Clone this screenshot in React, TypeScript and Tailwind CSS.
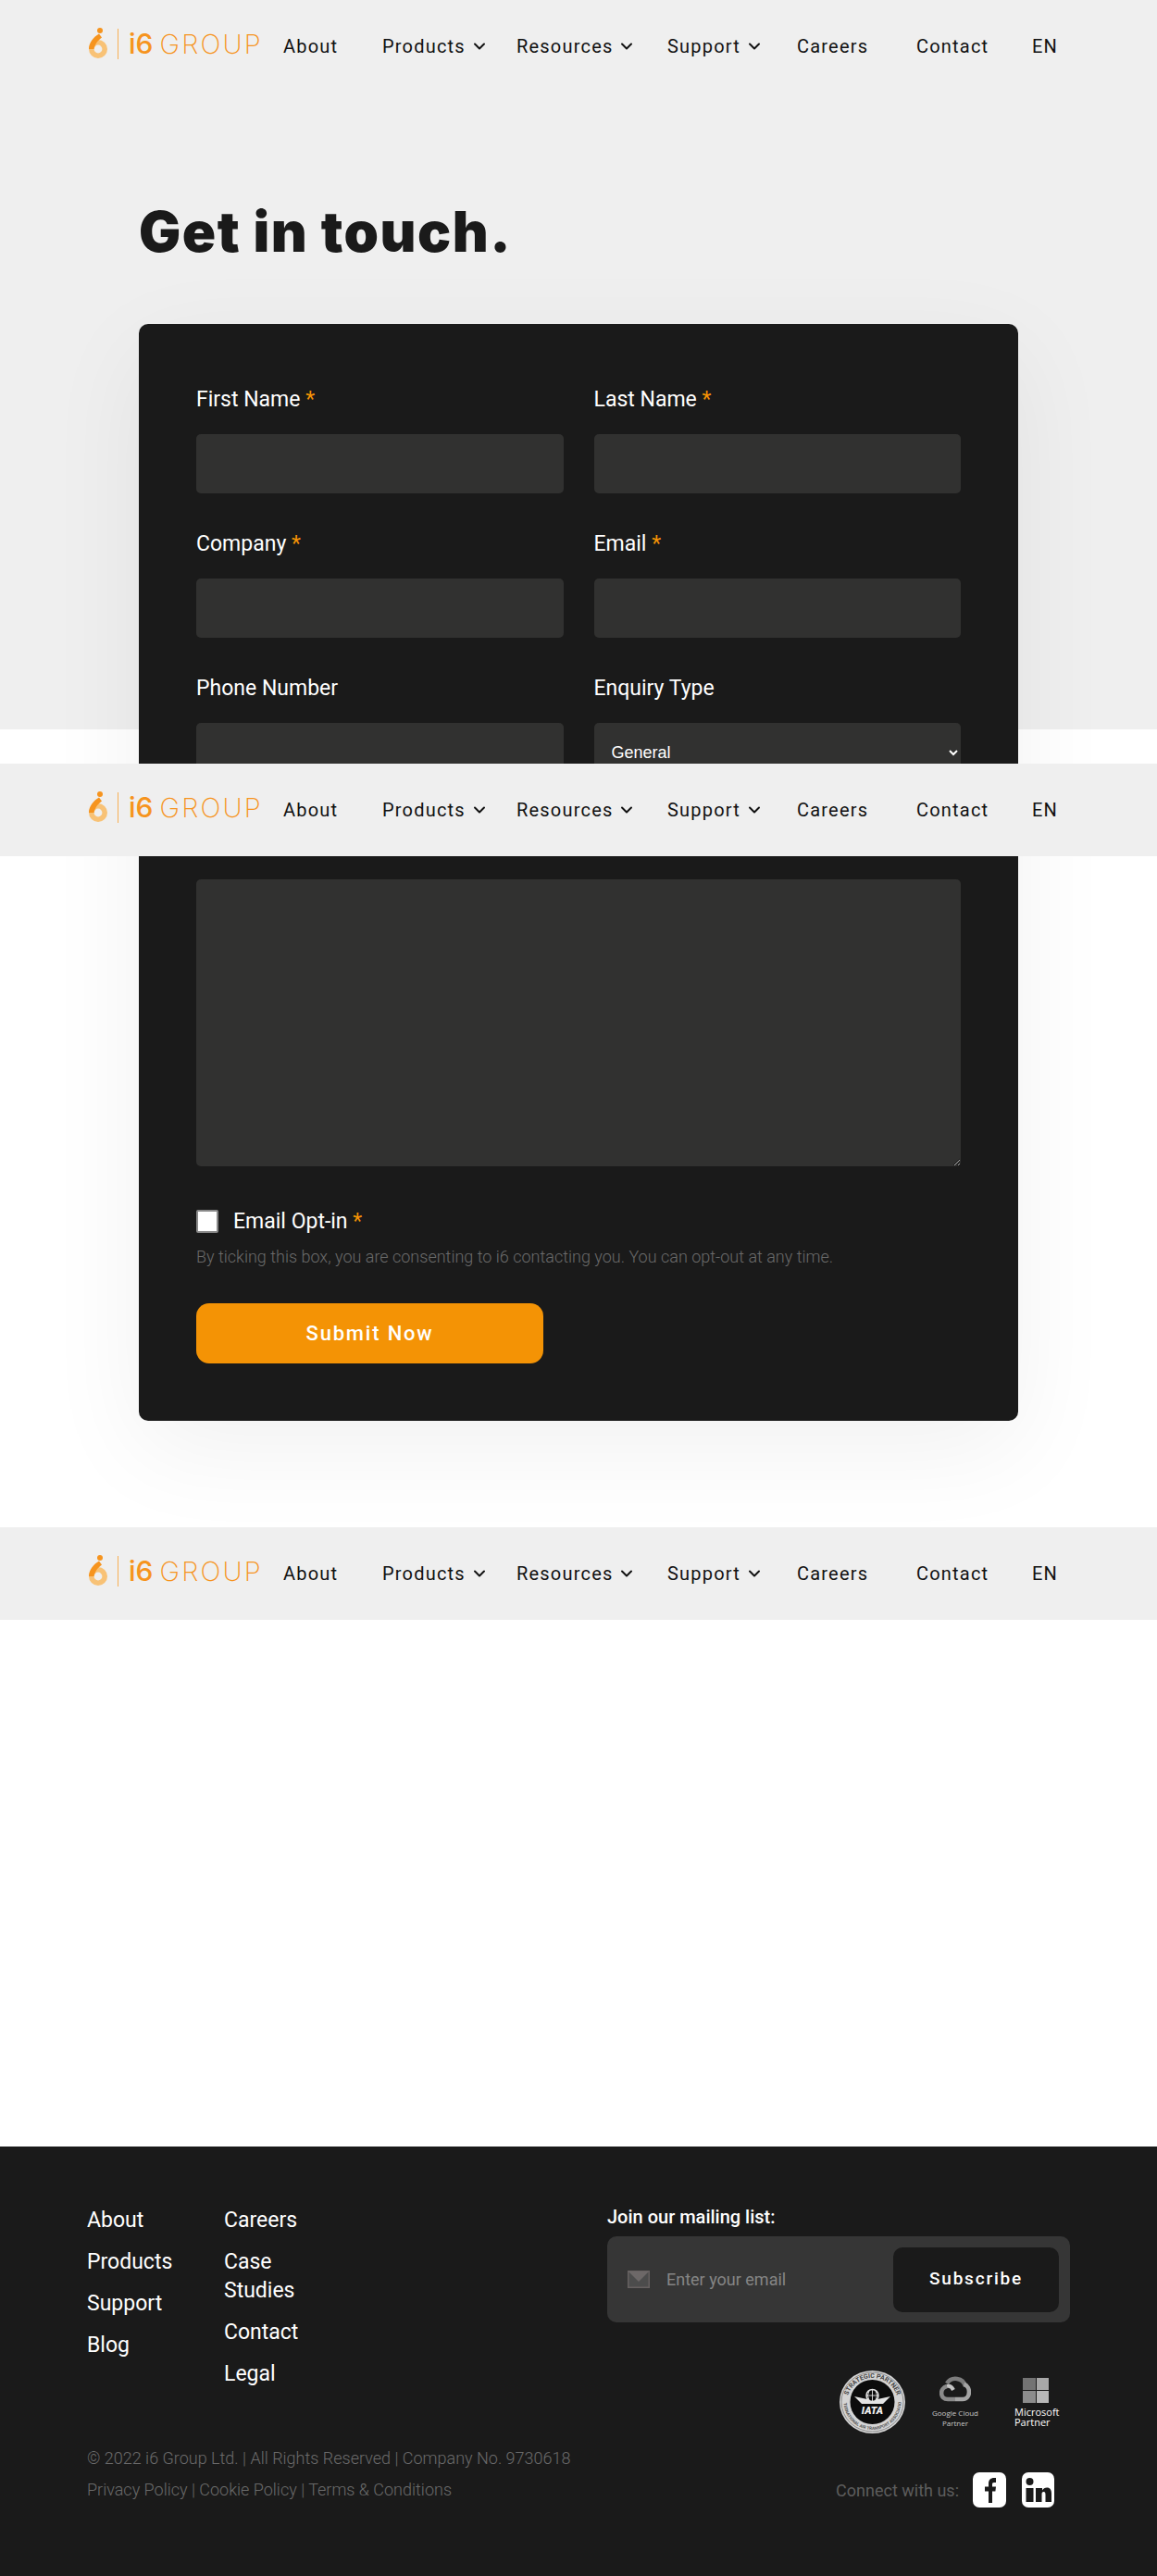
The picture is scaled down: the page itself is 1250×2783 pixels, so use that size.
import { ChevronDown } from "lucide-react";

const navItems = [
  { label: "About", width: "w-[107px]" },
  { label: "Products", width: "w-[145px]", caret: true },
  { label: "Resources", width: "w-[163px]", caret: true },
  { label: "Support", width: "w-[140px]", caret: true },
  { label: "Careers", width: "w-[129px]" },
  { label: "Contact", width: "w-[125px]" },
  { label: "EN", width: "w-[30px]" },
];

function Logo() {
  return (
    <div className="mb-[6px] flex w-[212px] items-center">
      <svg width="24" height="34" viewBox="0 0 24 34" className="shrink-0">
        <circle cx="12" cy="23" r="7.2" fill="none" stroke="#f8c276" strokeWidth="5.6" />
        <path d="M2 23 C2 16 7 10 13 6.5 L16 10.5 C12 13.5 8.5 17.5 7.5 23 Z" fill="#f6941e" />
        <circle cx="14" cy="3" r="3" fill="#f6941e" />
      </svg>
      <span className="ml-[9px] h-[33px] w-px bg-[#f8b055]" />
      <span className="ml-[11px] text-[30px] leading-none font-medium text-[#f6941e] [font-family:Inter,sans-serif]">i6</span>
      <span className="ml-[7px] text-[29px] leading-none font-extralight tracking-[2.2px] text-[#f6941e] [font-family:Inter,sans-serif]">GROUP</span>
    </div>
  );
}

function Header({ top }: { top: string }) {
  return (
    <header className={`absolute left-0 z-20 flex h-[100px] w-full items-center bg-[#efefef] pl-[94px] ${top}`}>
      <Logo />
      <nav className="flex items-center">
        {navItems.map((item) => (
          <a key={item.label} className={`flex items-center text-[20px] tracking-[1.2px] whitespace-nowrap text-[#111] ${item.width}`}>
            {item.label}
            {item.caret && <ChevronDown className="ml-[5px] h-[20px] w-[20px]" strokeWidth={2.4} />}
          </a>
        ))}
      </nav>
    </header>
  );
}

function Field({ label, required, children }: { label: string; required?: boolean; children: React.ReactNode }) {
  return (
    <div className="mb-[39px]">
      <label className="mb-[21px] block text-[23px] leading-[32px] text-white">
        {label}
        {required && <span className="text-[#f59305]"> *</span>}
      </label>
      {children}
    </div>
  );
}

const inputClass = "block h-[64px] w-full rounded-[5px] bg-[#313130] px-[15px] text-white outline-none";

function ContactForm() {
  return (
    <form className="relative z-10 mt-[64px] h-[1185px] rounded-[10px] bg-[#1a1a1a] px-[62px] pt-[66px] shadow-[0_30px_110px_rgba(0,0,0,0.06)]">
      <div className="grid grid-cols-2 gap-x-[33px]">
        <Field label="First Name" required><input className={inputClass} /></Field>
        <Field label="Last Name" required><input className={inputClass} /></Field>
        <Field label="Company" required><input className={inputClass} /></Field>
        <Field label="Email" required><input className={inputClass} /></Field>
        <Field label="Phone Number"><input className={inputClass} /></Field>
        <Field label="Enquiry Type">
          <select className={`${inputClass} text-[18px] [font-family:'Liberation_Sans',sans-serif]`}>
            <option>General</option>
          </select>
        </Field>
      </div>
      <label className="mb-[36px] block text-[23px] leading-[30px] text-white">Message</label>
      <textarea className="block h-[310px] w-full rounded-[5px] bg-[#313130] p-[19px] text-white outline-none" />
      <div className="mt-[44px] flex items-center">
        <input type="checkbox" className="h-[25px] w-[24px] shrink-0 appearance-none rounded-[2px] border-2 border-[#8a8a8a] bg-white" />
        <span className="ml-[16px] pt-[2px] text-[23px] leading-[28px] text-white">
          Email Opt-in<span className="text-[#f59305]"> *</span>
        </span>
      </div>
      <p className="mt-[11px] text-[18px] leading-[26px] font-light text-[#6a6a6a]">
        By ticking this box, you are consenting to i6 contacting you. You can opt-out at any time.
      </p>
      <button type="button" className="mt-[37px] block h-[65px] w-[375px] rounded-[14px] bg-[#f49305] text-[22px] font-medium tracking-[1.8px] text-white">
        Submit Now
      </button>
    </form>
  );
}

function PartnerBadges() {
  return (
    <div className="mt-[52px] flex items-start justify-end pr-[10px]">
      <svg width="71" height="68" viewBox="0 0 71 68">
        <defs>
          <path id="iata-top" d="M7.5 36 A28 28 0 0 1 63.5 36" />
          <path id="iata-bottom" d="M4.5 34 A31 30 0 0 0 66.5 34" />
        </defs>
        <ellipse cx="35.5" cy="34" rx="35.5" ry="34" fill="#d4d4d4" />
        <ellipse cx="35.5" cy="34" rx="33.5" ry="32" fill="none" stroke="#8c8c8c" strokeWidth="1" />
        <circle cx="35.5" cy="34" r="24" fill="#0c0c0c" />
        <text fontSize="7" fontWeight="700" fill="#444" fontFamily="Roboto, sans-serif" textAnchor="middle">
          <textPath href="#iata-top" startOffset="50%">STRATEGIC PARTNER</textPath>
        </text>
        <text fontSize="4.6" fontWeight="700" fill="#555" fontFamily="Roboto, sans-serif" textAnchor="middle">
          <textPath href="#iata-bottom" startOffset="50%">INTERNATIONAL AIR TRANSPORT ASSOCIATION</textPath>
        </text>
        <path d="M16 28 L30 31 L41 31 L55 28 L47 36 L24 36 Z" fill="#e4e4e4" />
        <circle cx="35.5" cy="27" r="6.5" fill="#0c0c0c" stroke="#e4e4e4" strokeWidth="1.5" />
        <path d="M35.5 20.5 V33.5 M29 27 H42 M32 21.5 Q29 27 32 32.5 M39 21.5 Q42 27 39 32.5" stroke="#e4e4e4" strokeWidth="0.9" fill="none" />
        <text x="35.5" y="47" textAnchor="middle" fontSize="11" fontStyle="italic" fontWeight="900" fill="#f0f0f0" fontFamily="Roboto, sans-serif">IATA</text>
      </svg>
      <div className="mt-[6px] ml-[28px] flex w-[52px] flex-col items-center">
        <svg width="34" height="28" viewBox="0 0 34 28">
          <path d="M8 8 A11 11 0 0 1 28 11" fill="none" stroke="#7d7d7d" strokeWidth="4.6" />
          <path d="M26.5 9 C34 11 34 25 25 25 L17 25" fill="none" stroke="#a5a5a5" strokeWidth="4.6" />
          <path d="M17 25 H9 C0 25 0 13 8 11" fill="none" stroke="#8a8a8a" strokeWidth="4.6" />
          <path d="M8 11 C12 10 14 13 15 15" fill="none" stroke="#c4c4c4" strokeWidth="4" />
        </svg>
        <span className="mt-[6px] text-center text-[8px] leading-[11px] whitespace-nowrap text-[#c8c8c8] [font-family:'Open_Sans',sans-serif]">Google Cloud<br />Partner</span>
      </div>
      <div className="mt-[8px] ml-[38px] flex w-[50px] flex-col">
        <div className="ml-[9px] grid w-[28px] grid-cols-2 gap-[1px]">
          <span className="h-[13px] bg-[#737373]" />
          <span className="h-[13px] bg-[#a8a8a8]" />
          <span className="h-[13px] bg-[#8c8c8c]" />
          <span className="h-[13px] bg-[#b8b8b8]" />
        </div>
        <span className="mt-[4px] text-[11px] leading-[11px] whitespace-nowrap text-white [font-family:'Open_Sans',sans-serif]">Microsoft<br />Partner</span>
      </div>
    </div>
  );
}

function Footer() {
  const col1 = ["About", "Products", "Support", "Blog"];
  const col2 = ["Careers", "Case Studies", "Contact", "Legal"];
  return (
    <footer className="flex h-[464px] justify-between bg-[#1a1a1a] px-[94px] pt-[64px]">
      <div>
        <div className="flex h-[208px] text-[23px] leading-[31px] text-white">
          <ul className="w-[148px]">
            {col1.map((l) => <li key={l} className="mb-[14px]">{l}</li>)}
          </ul>
          <ul className="w-[90px]">
            {col2.map((l) => <li key={l} className="mb-[14px]">{l}</li>)}
          </ul>
        </div>
        <p className="mt-[48px] text-[18px] leading-[34px] font-light text-[#6a6a6a]">© 2022 i6 Group Ltd. | All Rights Reserved | Company No. 9730618</p>
        <p className="text-[18px] leading-[34px] font-light text-[#6a6a6a]">Privacy Policy | Cookie Policy | Terms &amp; Conditions</p>
      </div>
      <div className="w-[500px]">
        <p className="mb-[9px] text-[20px] leading-[24px] font-medium text-white">Join our mailing list:</p>
        <div className="flex h-[93px] items-center rounded-[10px] bg-[#363636] pr-[12px] pl-[22px]">
          <svg width="24" height="19" viewBox="0 0 24 19" className="shrink-0">
            <rect x="0.75" y="0.75" width="22.5" height="17.5" fill="#4c4c4c" stroke="#666161" strokeWidth="1.5" />
            <path d="M1 1 H23 L12 12 Z" fill="#6d6868" />
          </svg>
          <input placeholder="Enter your email" className="ml-[18px] min-w-0 flex-1 bg-transparent text-[18px] text-white outline-none placeholder:text-[#858585]" />
          <button type="button" className="h-[70px] w-[179px] shrink-0 rounded-[10px] bg-[#1a1a1a] text-[19px] font-medium tracking-[1.8px] text-white">Subscribe</button>
        </div>
        <PartnerBadges />
        <div className="mt-[42px] flex items-center justify-end pr-[17px]">
          <span className="text-[18px] text-[#5d5d5d]">Connect with us:</span>
          <svg width="36" height="38" viewBox="0 0 36 38" className="ml-[15px]">
            <rect width="36" height="38" rx="7" fill="#fff" />
            <path d="M17 33 V20.5 H13 V15.5 H17 V12 C17 8 19.5 6 23 6 H25 V11 H23 C21.5 11 21 11.8 21 13 V15.5 H25 L24.4 20.5 H21 V33 Z" fill="#1a1a1a" />
          </svg>
          <svg width="35" height="38" viewBox="0 0 35 38" className="ml-[17px]">
            <rect width="35" height="38" rx="7" fill="#fff" />
            <circle cx="8.5" cy="10" r="4" fill="#1a1a1a" />
            <path d="M4.5 17 H12.5 V32 H4.5 Z M15 17 H22 V19.5 C23 17.8 25 16.5 27 16.5 C30.6 16.5 32 19 32 23 V32 H25.5 V24 C25.5 22 25 20.9 23.6 20.9 C22 20.9 21.5 22 21.5 24 V32 H15 Z" fill="#1a1a1a" />
          </svg>
        </div>
      </div>
    </footer>
  );
}

export default function App() {
  return (
    <div className="relative h-[2783px] overflow-hidden bg-white [font-family:Roboto,sans-serif]">
      <Header top="top-0" />
      <Header top="top-[825px]" />
      <Header top="top-[1650px]" />
      <section className="h-[788px] bg-[#efefef] px-[150px] pt-[214px]">
        <h1 className="text-[60px] leading-[72px] font-black tracking-[1.5px] text-[#1a1a1a] [font-family:Inter,sans-serif]">Get in touch.</h1>
        <ContactForm />
      </section>
      <div className="h-[1531px]" />
      <Footer />
    </div>
  );
}
